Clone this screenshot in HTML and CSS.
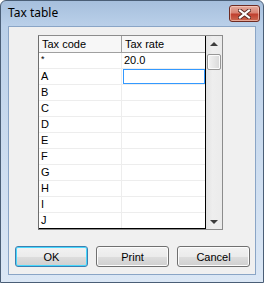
FILE: index.html
```html
<!DOCTYPE html>
<html>
<head>
<meta charset="utf-8">
<link rel="stylesheet" href="styles.css">
</head>
<body>
<div class="window">
  <div class="titlebar">
    <span class="title">Tax table</span>
    <div class="close">
      <svg width="13" height="10" viewBox="0 0 13 10">
        <path d="M2 1.5 L11 8.5 M11 1.5 L2 8.5" stroke="#5a2a22" stroke-width="4" stroke-linecap="square"/>
        <path d="M2 1.5 L11 8.5 M11 1.5 L2 8.5" stroke="#ffffff" stroke-width="2.2" stroke-linecap="square"/>
      </svg>
    </div>
  </div>
  <div class="client">
    <div class="gridbox">
      <div class="grid">
        <div class="row head"><div class="cell c1">Tax code</div><div class="cell c2">Tax rate</div></div>
        <div class="row"><div class="cell c1 star">*</div><div class="cell c2">20.0</div></div>
        <div class="row"><div class="cell c1">A</div><div class="cell c2 editcell"><div class="edit"></div></div></div>
        <div class="row"><div class="cell c1">B</div><div class="cell c2"></div></div>
        <div class="row"><div class="cell c1">C</div><div class="cell c2"></div></div>
        <div class="row"><div class="cell c1">D</div><div class="cell c2"></div></div>
        <div class="row"><div class="cell c1">E</div><div class="cell c2"></div></div>
        <div class="row"><div class="cell c1">F</div><div class="cell c2"></div></div>
        <div class="row"><div class="cell c1">G</div><div class="cell c2"></div></div>
        <div class="row"><div class="cell c1">H</div><div class="cell c2"></div></div>
        <div class="row"><div class="cell c1">I</div><div class="cell c2"></div></div>
        <div class="row last"><div class="cell c1">J</div><div class="cell c2"></div></div>
      </div>
      <div class="vscroll">
        <div class="sbtn"><span class="tri up"></span></div>
        <div class="thumb"></div>
        <div class="track"></div>
        <div class="sbtn"><span class="tri down"></span></div>
      </div>
    </div>
    <div class="buttons">
      <button class="btn default">OK</button>
      <button class="btn">Print</button>
      <button class="btn">Cancel</button>
    </div>
  </div>
</div>
</body>
</html>
```
FILE: styles.css
```css
html, body {
  margin: 0;
  padding: 0;
  background: #ffffff;
}
body {
  font-family: "Liberation Sans", Arial, sans-serif;
  font-size: 11px;
  color: #000;
}
.window {
  width: 264px;
  height: 283px;
  box-sizing: border-box;
  border: 1px solid #4a5e76;
  border-radius: 6px 6px 0 0;
  background: linear-gradient(#a6bfdd 0, #bad0e9 25px, #c9daee 45%, #dbe7f5 100%);
  padding: 0 7px 7px 7px;
  display: flex;
  flex-direction: column;
}
.titlebar {
  height: 25px;
  display: flex;
  justify-content: space-between;
  align-items: flex-start;
  margin-right: -4px;
}
.title {
  font-family: "Noto Sans", "Open Sans", sans-serif;
  font-size: 12px;
  line-height: 16px;
  padding-top: 4px;
  color: #000;
}
.close {
  margin-top: 4px;
  width: 31px;
  height: 17px;
  box-sizing: border-box;
  border: 1px solid #6e2b22;
  border-radius: 3px;
  background: linear-gradient(#e4ab9d 0%, #d98474 45%, #c0402f 55%, #cc6a52 100%);
  box-shadow: inset 0 0 0 1px rgba(255,220,210,0.55);
  display: flex;
  align-items: center;
  justify-content: center;
}
.close svg { display: block; }
.client {
  flex: 1;
  border: 1px solid #8aa5c6;
  background: #f0f0f0;
  padding: 8px 0 0 6px;
  display: flex;
  flex-direction: column;
}
.gridbox {
  margin-left: 23px;
  width: 185px;
  height: 195px;
  box-sizing: border-box;
  border: 1px solid #8c8c8c;
  border-left-color: #6e6e6e;
  display: flex;
  background: #fff;
}
.grid {
  width: 167px;
  box-sizing: border-box;
  border-right: 1px solid #000;
  border-bottom: 1px solid #000;
  display: flex;
  flex-direction: column;
}
.row {
  display: flex;
  height: 16px;
  box-sizing: border-box;
  border-bottom: 1px solid #ededed;
}
.row.last {
  height: 15px;
  border-bottom: none;
}
.row.head {
  height: 17px;
  border-bottom: 1px solid #a0a0a0;
  background: #f7f7f7;
}
.cell {
  box-sizing: border-box;
  line-height: 15px;
  padding-left: 2px;
  white-space: nowrap;
}
.c1 {
  width: 83px;
  border-right: 1px solid #ededed;
}
.c2 {
  width: 83px;
  padding-left: 2px;
}
.head .cell {
  padding-top: 1px;
}
.head .c1 {
  border-right-color: #a0a0a0;
  padding-left: 3px;
}
.head .c2 {
  padding-left: 3px;
}
.star {
  font-size: 9px;
  line-height: 12px;
}
.editcell {
  padding: 0 0 0 1px;
}
.edit {
  height: 15px;
  box-sizing: border-box;
  border: 1px solid #3399ff;
  background: #fff;
}
.vscroll {
  width: 16px;
  display: flex;
  flex-direction: column;
  background: linear-gradient(to right, #e2e2e2, #eeeeee 40%, #ebebeb);
}
.sbtn {
  height: 17px;
  display: flex;
  align-items: center;
  justify-content: center;
}
.tri {
  width: 0;
  height: 0;
  border-left: 4px solid transparent;
  border-right: 4px solid transparent;
}
.tri.up {
  border-bottom: 4px solid #3c3c3c;
  margin-top: -2px;
}
.tri.down {
  border-top: 4px solid #3c3c3c;
  margin-top: 2px;
}
.thumb {
  margin: 1px 0 0 1px;
  width: 14px;
  height: 16px;
  box-sizing: border-box;
  border: 1px solid #979797;
  border-radius: 2px;
  background: linear-gradient(to right, #f3f3f3, #e6e6e6 50%, #d8d8d8);
  box-shadow: inset 0 0 0 1px #fbfbfb;
}
.track {
  flex: 1;
}
.buttons {
  display: flex;
  gap: 8px;
  margin-top: 16px;
}
.btn {
  width: 73px;
  height: 21px;
  box-sizing: border-box;
  margin: 0;
  padding: 0;
  font-family: "Liberation Sans", Arial, sans-serif;
  font-size: 11px;
  color: #000;
  border: 1px solid #707070;
  border-radius: 3px;
  background: linear-gradient(#f2f2f2 0%, #ebebeb 50%, #dddddd 51%, #cfcfcf 100%);
  box-shadow: inset 0 0 0 1px #fcfcfc;
}
.btn.default {
  border-color: #3c7fb1;
  box-shadow: inset 0 0 0 1px #48d8fd;
}
```
